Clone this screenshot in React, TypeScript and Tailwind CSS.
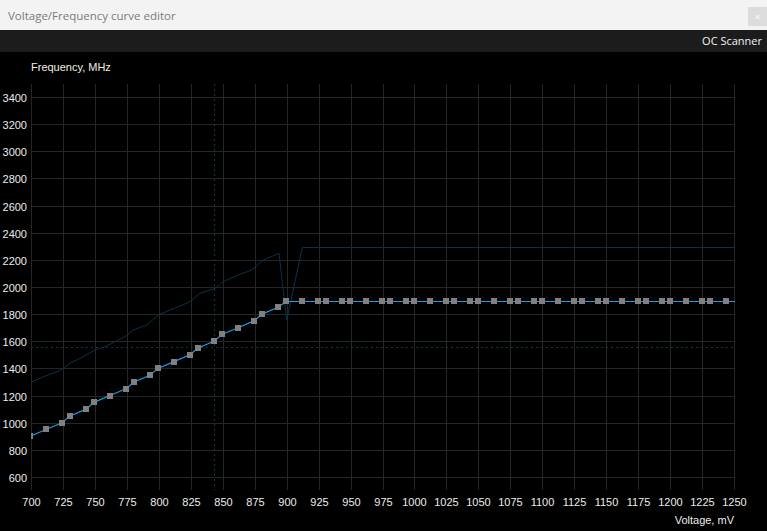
import React from "react";

const PLOT_L = 31;
const PLOT_R = 734;
const PLOT_T = 84;
const PLOT_B = 490;

const vx = (v: number) => 31 + ((v - 700) * 703) / 550;
const fy = (f: number) => 97 + ((3400 - f) * 27.14) / 200;

const xTicks = Array.from({ length: 23 }, (_, i) => 700 + i * 25);
const yTicks = Array.from({ length: 15 }, (_, i) => 3400 - i * 200);

const offs = [0, 16, 32, 40, 56];
const squares: { x: number; y: number }[] = [];
for (let g = 0; g <= 10; g++) {
  for (const o of offs) {
    const x = 30 + 64 * g + o;
    if (x > 730) continue;
    const idx = squares.length;
    const f = idx <= 20 ? 900 + 50 * idx : 1900;
    squares.push({ x, y: fy(f) });
  }
}

const ghost: [number, number][] = [
  [31, 382.3],
  [43.3, 376.7],
  [60, 370.7],
  [70, 363.3],
  [83.3, 356.7],
  [95, 350],
  [106.7, 346],
  [125, 336.7],
  [133.3, 330],
  [146.7, 325],
  [158.3, 315],
  [170, 310],
  [180, 306],
  [190, 301.7],
  [200, 293.3],
  [215, 288.3],
  [223.3, 281.7],
  [238.3, 275],
  [251.7, 270],
  [263.3, 260],
  [279, 253.3],
  [286.7, 320],
  [302.3, 247.5],
  [734, 247.5],
];

function Chart() {
  const flatY = Math.round(fy(1900)) + 0.5;
  return (
    <svg
      width={767}
      height={479}
      viewBox="0 52 767 479"
      className="block"
      style={{ fontFamily: '"Liberation Sans", Arial, sans-serif' }}
    >
      <defs>
        <clipPath id="plot">
          <rect x={PLOT_L} y={PLOT_T} width={PLOT_R - PLOT_L + 1} height={PLOT_B - PLOT_T} />
        </clipPath>
      </defs>
      <g stroke="#262626" strokeWidth={1} shapeRendering="crispEdges">
        {xTicks.map((v) => {
          const x = Math.round(vx(v)) + 0.5;
          return <line key={v} x1={x} x2={x} y1={PLOT_T} y2={PLOT_B} />;
        })}
        {yTicks.map((f) => {
          const y = Math.round(fy(f)) + 0.5;
          return <line key={f} x1={PLOT_L} x2={PLOT_R + 1} y1={y} y2={y} />;
        })}
      </g>
      <g stroke="#0d3852" strokeWidth={1} strokeDasharray="2 3" shapeRendering="crispEdges">
        <line x1={214.5} x2={214.5} y1={PLOT_T} y2={PLOT_B} />
        <line x1={PLOT_L} x2={PLOT_R} y1={347.5} y2={347.5} />
      </g>
      <g clipPath="url(#plot)">
        <polyline
          points={ghost.map((p) => p.join(",")).join(" ")}
          fill="none"
          stroke="#0b3348"
          strokeWidth={1}
        />
        <polyline
          points={squares
            .map((s, i) => (i >= 20 ? `${s.x},${flatY}` : `${s.x},${s.y}`))
            .concat([`${PLOT_R + 1},${flatY}`])
            .join(" ")}
          fill="none"
          stroke="#1a9eea"
          strokeWidth={1.2}
        />
        <line x1={PLOT_L} y1={squares[0].y} x2={squares[0].x} y2={squares[0].y} stroke="#1a9eea" strokeWidth={1.2} />
        {squares.map((s, i) => (
          <rect
            key={i}
            x={s.x - 3}
            y={Math.round(s.y) - 3}
            width={6}
            height={6}
            fill="#808080"
            shapeRendering="crispEdges"
          />
        ))}
      </g>
      <g fill="#ececec" fontSize={11}>
        {yTicks.map((f) => (
          <text key={f} x={27} y={Math.round(fy(f)) + 4.5} textAnchor="end">
            {f}
          </text>
        ))}
        {xTicks.map((v) => (
          <text key={v} x={Math.round(vx(v)) + 0.5} y={506} textAnchor="middle">
            {v}
          </text>
        ))}
        <text x={734} y={524} textAnchor="end">
          Voltage, mV
        </text>
      </g>
    </svg>
  );
}

export default function App() {
  return (
    <div className="w-[767px] h-[531px] overflow-hidden bg-black flex flex-col">
      <div className="h-[30px] bg-[#f3f3f3] flex items-center justify-between pl-[8px]">
        <span
          className="text-[11.5px] text-[#7a7a7a] pt-[2px]"
          style={{ fontFamily: '"Open Sans", "Noto Sans", sans-serif' }}
        >
          Voltage/Frequency curve editor
        </span>
        <div className="w-[19px] h-[19px] bg-[#dcdcdc] mt-[2px] flex items-center justify-center text-[11px] leading-none text-[#f7f7f7]">
          ×
        </div>
      </div>
      <div className="h-[22px] bg-[#1c1c1c] flex items-center justify-end pr-[5px]">
        <span
          className="text-[11px] text-[#f2f2f2]"
          style={{ fontFamily: '"Open Sans", "Noto Sans", sans-serif' }}
        >
          OC Scanner
        </span>
      </div>
      <div className="relative flex-1 bg-black">
        <div
          className="absolute left-[31px] top-[7px] text-[11px] text-[#f0ede2]"
          style={{ fontFamily: '"Liberation Sans", Arial, sans-serif' }}
        >
          Frequency, MHz
        </div>
        <Chart />
      </div>
    </div>
  );
}
